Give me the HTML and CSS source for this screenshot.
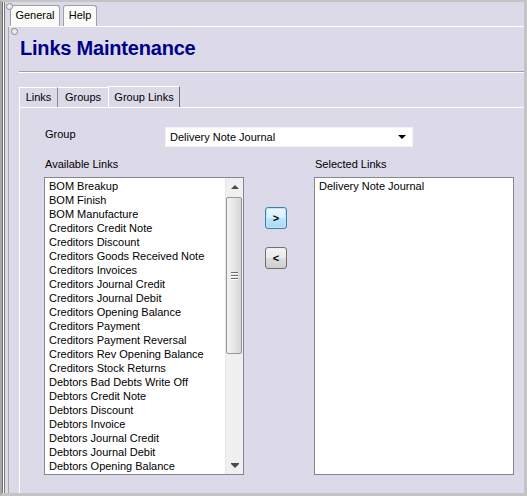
FILE: index.html
```html
<!DOCTYPE html>
<html>
<head>
<title>Links Maintenance</title>
<meta charset="UTF-8">
<link rel="stylesheet" href="styles.css">
</head>
<body>

<!-- *********************************************************
APP FRAME
********************************************************** -->

<div class="app">
	<span class="dot dot-app"></span>

	<div class="apptabs">
		<div class="apptab tab-general">General</div>
		<div class="apptab tab-help">Help</div>
	</div>

	<div class="module">
		<span class="dot dot-module"></span>

		<h1 class="title">Links Maintenance</h1>
		<div class="rule"></div>

		<div class="tabs">
			<div class="tab tab-links">Links</div>
			<div class="tab tab-groups">Groups</div>
			<div class="tab tab-grouplinks active">Group Links</div>
		</div>

		<div class="tabpanel">
			<div class="group-row">
				<div class="label group-label">Group</div>
				<div class="select">
					<span>Delivery Note Journal</span>
					<span class="caret"></span>
				</div>
			</div>

			<div class="pickers">
				<div class="picker">
					<div class="label">Available Links</div>
					<div class="listbox">
						<ul class="items">
							<li>BOM Breakup</li>
							<li>BOM Finish</li>
							<li>BOM Manufacture</li>
							<li>Creditors Credit Note</li>
							<li>Creditors Discount</li>
							<li>Creditors Goods Received Note</li>
							<li>Creditors Invoices</li>
							<li>Creditors Journal Credit</li>
							<li>Creditors Journal Debit</li>
							<li>Creditors Opening Balance</li>
							<li>Creditors Payment</li>
							<li>Creditors Payment Reversal</li>
							<li>Creditors Rev Opening Balance</li>
							<li>Creditors Stock Returns</li>
							<li>Debtors Bad Debts Write Off</li>
							<li>Debtors Credit Note</li>
							<li>Debtors Discount</li>
							<li>Debtors Invoice</li>
							<li>Debtors Journal Credit</li>
							<li>Debtors Journal Debit</li>
							<li>Debtors Opening Balance</li>
						</ul>
						<div class="scrollbar">
							<div class="sb-btn"><span class="arrow-up"></span></div>
							<div class="sb-thumb"><span class="grip"></span></div>
							<div class="sb-track"></div>
							<div class="sb-btn"><span class="arrow-down"></span></div>
						</div>
					</div>
				</div>

				<div class="movers">
					<button class="mover focused">&gt;</button>
					<button class="mover">&lt;</button>
				</div>

				<div class="picker">
					<div class="label">Selected Links</div>
					<div class="listbox">
						<ul class="items">
							<li>Delivery Note Journal</li>
						</ul>
					</div>
				</div>
			</div>
		</div>
	</div>
</div>

</body>
</html>
```

FILE: styles.css
```css
body{
	margin: 0px;
	font-family: "Liberation Sans", Arial, sans-serif;
	font-size: 11px;
	color: #000;
	background: #dcd9e9;
}

/*********************************************************
FRAME
**********************************************************/

.app{
	position: relative;
	width: 527px;
	height: 496px;
	box-sizing: border-box;
	display: flex;
	flex-direction: column;
	background: #dcd9e9;
	border-top: 2px solid #c4c4c4;
	border-right: 3px solid #c4c4c4;
	border-bottom: 3px solid #c4c4c4;
	border-left: 2px solid #a8a8a8;
	box-shadow: inset 1px 0 0 #6c6c6c, inset 2px 0 0 #fff, inset 3px 0 0 #7a7a7a;
}

.dot{
	position: absolute;
	width: 5px;
	height: 5px;
	border: 1px solid #8a8a8a;
	border-radius: 50%;
	background: #ececec;
	z-index: 2;
}

.dot-app{
	left: 4px;
	top: 1px;
}

.dot-module{
	left: 2px;
	top: 1px;
}

.apptabs{
	display: flex;
	gap: 2px;
	padding: 3px 0 0 8px;
	height: 21px;
}

.apptab{
	height: 20px;
	line-height: 19px;
	text-align: center;
	border: 1px solid #9aa2a8;
	border-bottom: none;
	border-radius: 3px 3px 0 0;
	background: #fbfbf7;
}

.tab-general{
	width: 48px;
}

.tab-help{
	width: 32px;
	margin-left: 1px;
}

/*********************************************************
MODULE
**********************************************************/

.module{
	position: relative;
	flex: 1;
	display: flex;
	flex-direction: column;
	margin-left: 6px;
	padding-left: 10px;
	border-top: 1px solid #fff;
	border-left: 1px solid #a8a8a8;
}

.title{
	margin: 9px 0 0 1px;
	font-size: 20px;
	line-height: 24px;
	letter-spacing: -0.2px;
	font-weight: bold;
	color: #000088;
}

.rule{
	margin-top: 11px;
	height: 0px;
	border-top: 1px solid #a0a0a0;
	border-bottom: 1px solid #fff;
}

.tabs{
	display: flex;
	align-items: flex-end;
	margin-top: 13px;
	height: 21px;
}

.tab{
	height: 19px;
	line-height: 19px;
	text-align: center;
	border-top: 1px solid #fff;
	border-left: 1px solid #fff;
	border-right: 1px solid #8a8a8a;
}

.tab-links{
	width: 37px;
}

.tab-groups{
	width: 50px;
	border-left: none;
	border-right: none;
}

.tab.active{
	width: 70px;
	height: 20px;
	line-height: 20px;
	border-right: 1px solid #6a6a6a;
}

.tabpanel{
	flex: 1;
	padding: 19px 0 0 24px;
	border-top: 1px solid #fff;
	border-left: 1px solid #fff;
}

.label{
	line-height: 14px;
	padding-left: 1px;
}

.group-row{
	display: flex;
	align-items: flex-start;
	height: 20px;
}

.group-label{
	width: 120px;
}

.select{
	display: flex;
	align-items: center;
	justify-content: space-between;
	box-sizing: border-box;
	width: 248px;
	height: 20px;
	padding: 0 6px 0 4px;
	background: #fff;
	border: 1px solid #f2f2f6;
	line-height: 18px;
}

.caret{
	width: 0px;
	height: 0px;
	border-left: 4px solid transparent;
	border-right: 4px solid transparent;
	border-top: 4px solid #000;
}

/*********************************************************
PICKERS
**********************************************************/

.pickers{
	display: flex;
	margin-top: 10px;
}

.picker .label{
	margin-bottom: 6px;
}

.listbox{
	display: flex;
	box-sizing: border-box;
	width: 200px;
	height: 298px;
	background: #fff;
	border: 1px solid #828790;
	overflow: hidden;
}

.items{
	flex: 1;
	margin: 0px;
	padding: 1px 3px 1px 4px;
	list-style: none;
	line-height: 14px;
	white-space: nowrap;
	overflow: hidden;
}

.scrollbar{
	display: flex;
	flex-direction: column;
	width: 17px;
	background: #f0f0f0;
	border-left: 1px solid #e6e6e6;
}

.sb-btn{
	display: flex;
	align-items: center;
	justify-content: center;
	height: 17px;
}

.arrow-up,
.arrow-down{
	width: 0px;
	height: 0px;
	border-left: 4px solid transparent;
	border-right: 4px solid transparent;
}

.arrow-up{
	border-bottom: 4px solid #4a4a4a;
}

.arrow-down{
	border-top: 4px solid #4a4a4a;
	box-shadow: 0 -1px 0 #4a4a4a;
}

.sb-thumb{
	display: flex;
	align-items: center;
	justify-content: center;
	height: 155px;
	margin: 2px 1px 0 0;
	border: 1px solid #979797;
	border-radius: 2px;
	background: linear-gradient(to right, #f3f3f3, #e6e6e6 50%, #d6d6d6);
}

.grip{
	width: 7px;
	height: 1px;
	background: #6e6e6e;
	box-shadow: 0 3px 0 #6e6e6e, 0 -3px 0 #6e6e6e, 0 1px 0 #fff, 0 4px 0 #fff, 0 -2px 0 #fff;
}

.sb-track{
	flex: 1;
}

.movers{
	display: flex;
	flex-direction: column;
	gap: 18px;
	width: 70px;
	padding: 50px 0 0 21px;
	box-sizing: border-box;
}

.mover{
	width: 22px;
	height: 22px;
	padding: 0px;
	font-family: "Liberation Sans", Arial, sans-serif;
	font-size: 11px;
	font-weight: bold;
	color: #000;
	border: 1px solid #707070;
	border-radius: 3px;
	background: linear-gradient(#f2f2f2, #ebebeb 50%, #dddddd 51%, #cfcfcf);
}

.mover.focused{
	border-color: #3c7fb1;
	background: linear-gradient(#eaf6fd, #d9f0fc 50%, #bee6fd 51%, #a7d9f5);
	box-shadow: inset 0 0 0 1px #c4e5f6;
}
```
